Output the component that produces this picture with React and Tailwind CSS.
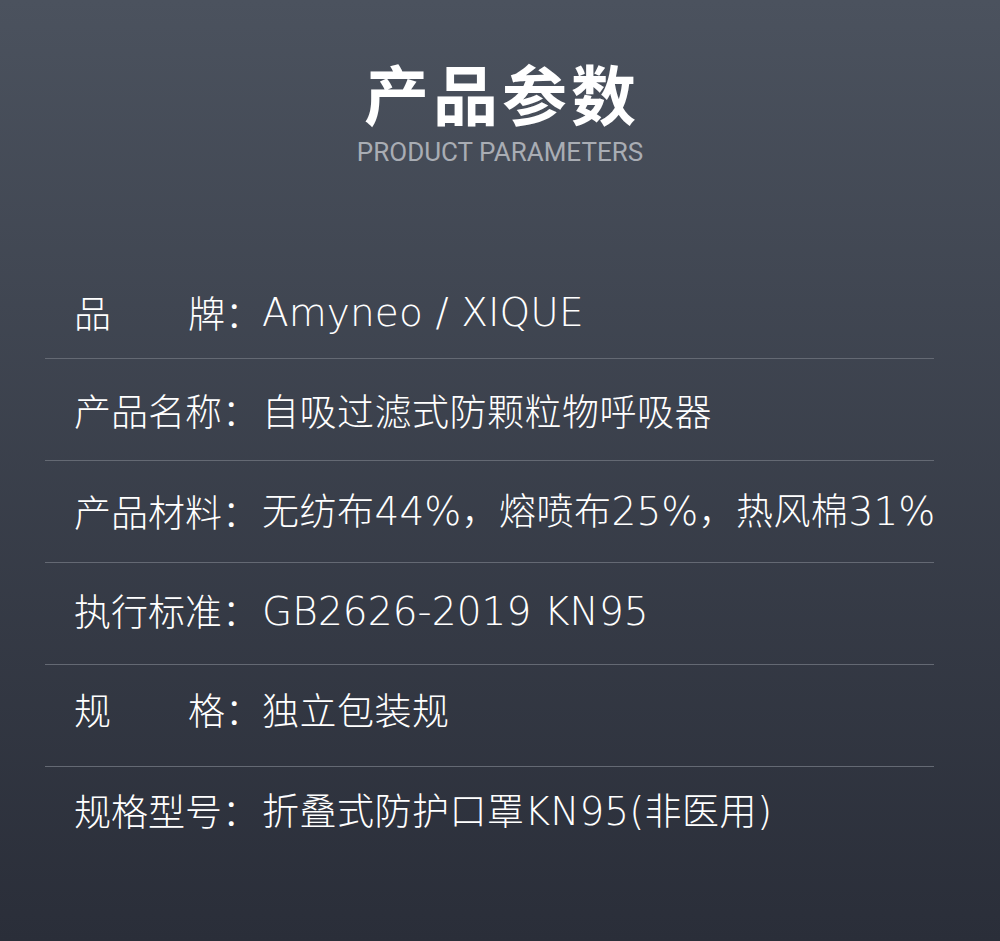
const rows = [
  { label: ["品", "牌："], value: "Amyneo / XIQUE", pad: "pt-[9px]" },
  { label: ["产品名称："], value: "自吸过滤式防颗粒物呼吸器", pad: "pt-[2px]" },
  { label: ["产品材料："], value: "无纺布44%，熔喷布25%，热风棉31%", pad: "pb-[1px]" },
  { label: ["执行标准："], value: "GB2626-2019 KN95", pad: "pb-[6px]" },
  { label: ["规", "格："], value: "独立包装规", pad: "pb-[12px]" },
  { label: ["规格型号："], value: "折叠式防护口罩KN95(非医用)", pad: "pb-[15px]" },
];

// latin runs are set a bit larger, like the reference's geometric face
function Value({ text }) {
  const parts = text.split(/([\x20-\x7E]+)/).filter(Boolean);
  return (
    <span className="whitespace-nowrap tracking-[0.5px]">
      {parts.map((p, i) =>
        /^[\x20-\x7E]+$/.test(p) ? (
          <span
            key={i}
            className="text-[39px] tracking-[0.1px]"
            style={{ fontFamily: '"DejaVu Sans", sans-serif' }}
          >
            {p}
          </span>
        ) : (
          <span key={i}>{p}</span>
        )
      )}
    </span>
  );
}

export default function App() {
  return (
    <div
      className="w-[1000px] h-[941px] bg-gradient-to-b from-[#4b525e] to-[#2a2e39] text-white overflow-hidden"
      style={{ fontFamily: '"Noto Sans CJK SC", "Noto Sans", sans-serif' }}
    >
      <div className="flex flex-col items-center pt-[45px]">
        <h1 className="text-[65px] leading-[94px] font-bold tracking-[4px] pl-[4px]">
          产品参数
        </h1>
        <div
          className="text-[26px] leading-[30px] mt-[-2px] text-[#a9adb4]"
          style={{ fontFamily: "Roboto, sans-serif" }}
        >
          PRODUCT PARAMETERS
        </div>
      </div>

      <div className="ml-[45px] w-[889px] mt-[90px]">
        {rows.map((row, i) => (
          <div
            key={i}
            className={`flex items-center h-[102px] pl-[29px] text-[37px] font-light leading-none ${row.pad} ${
              i < rows.length - 1 ? "border-b border-[#646973]" : ""
            }`}
          >
            <div className="w-[188px] flex justify-between shrink-0">
              {row.label.map((l, j) => (
                <span key={j}>{l}</span>
              ))}
            </div>
            <Value text={row.value} />
          </div>
        ))}
      </div>
    </div>
  );
}
